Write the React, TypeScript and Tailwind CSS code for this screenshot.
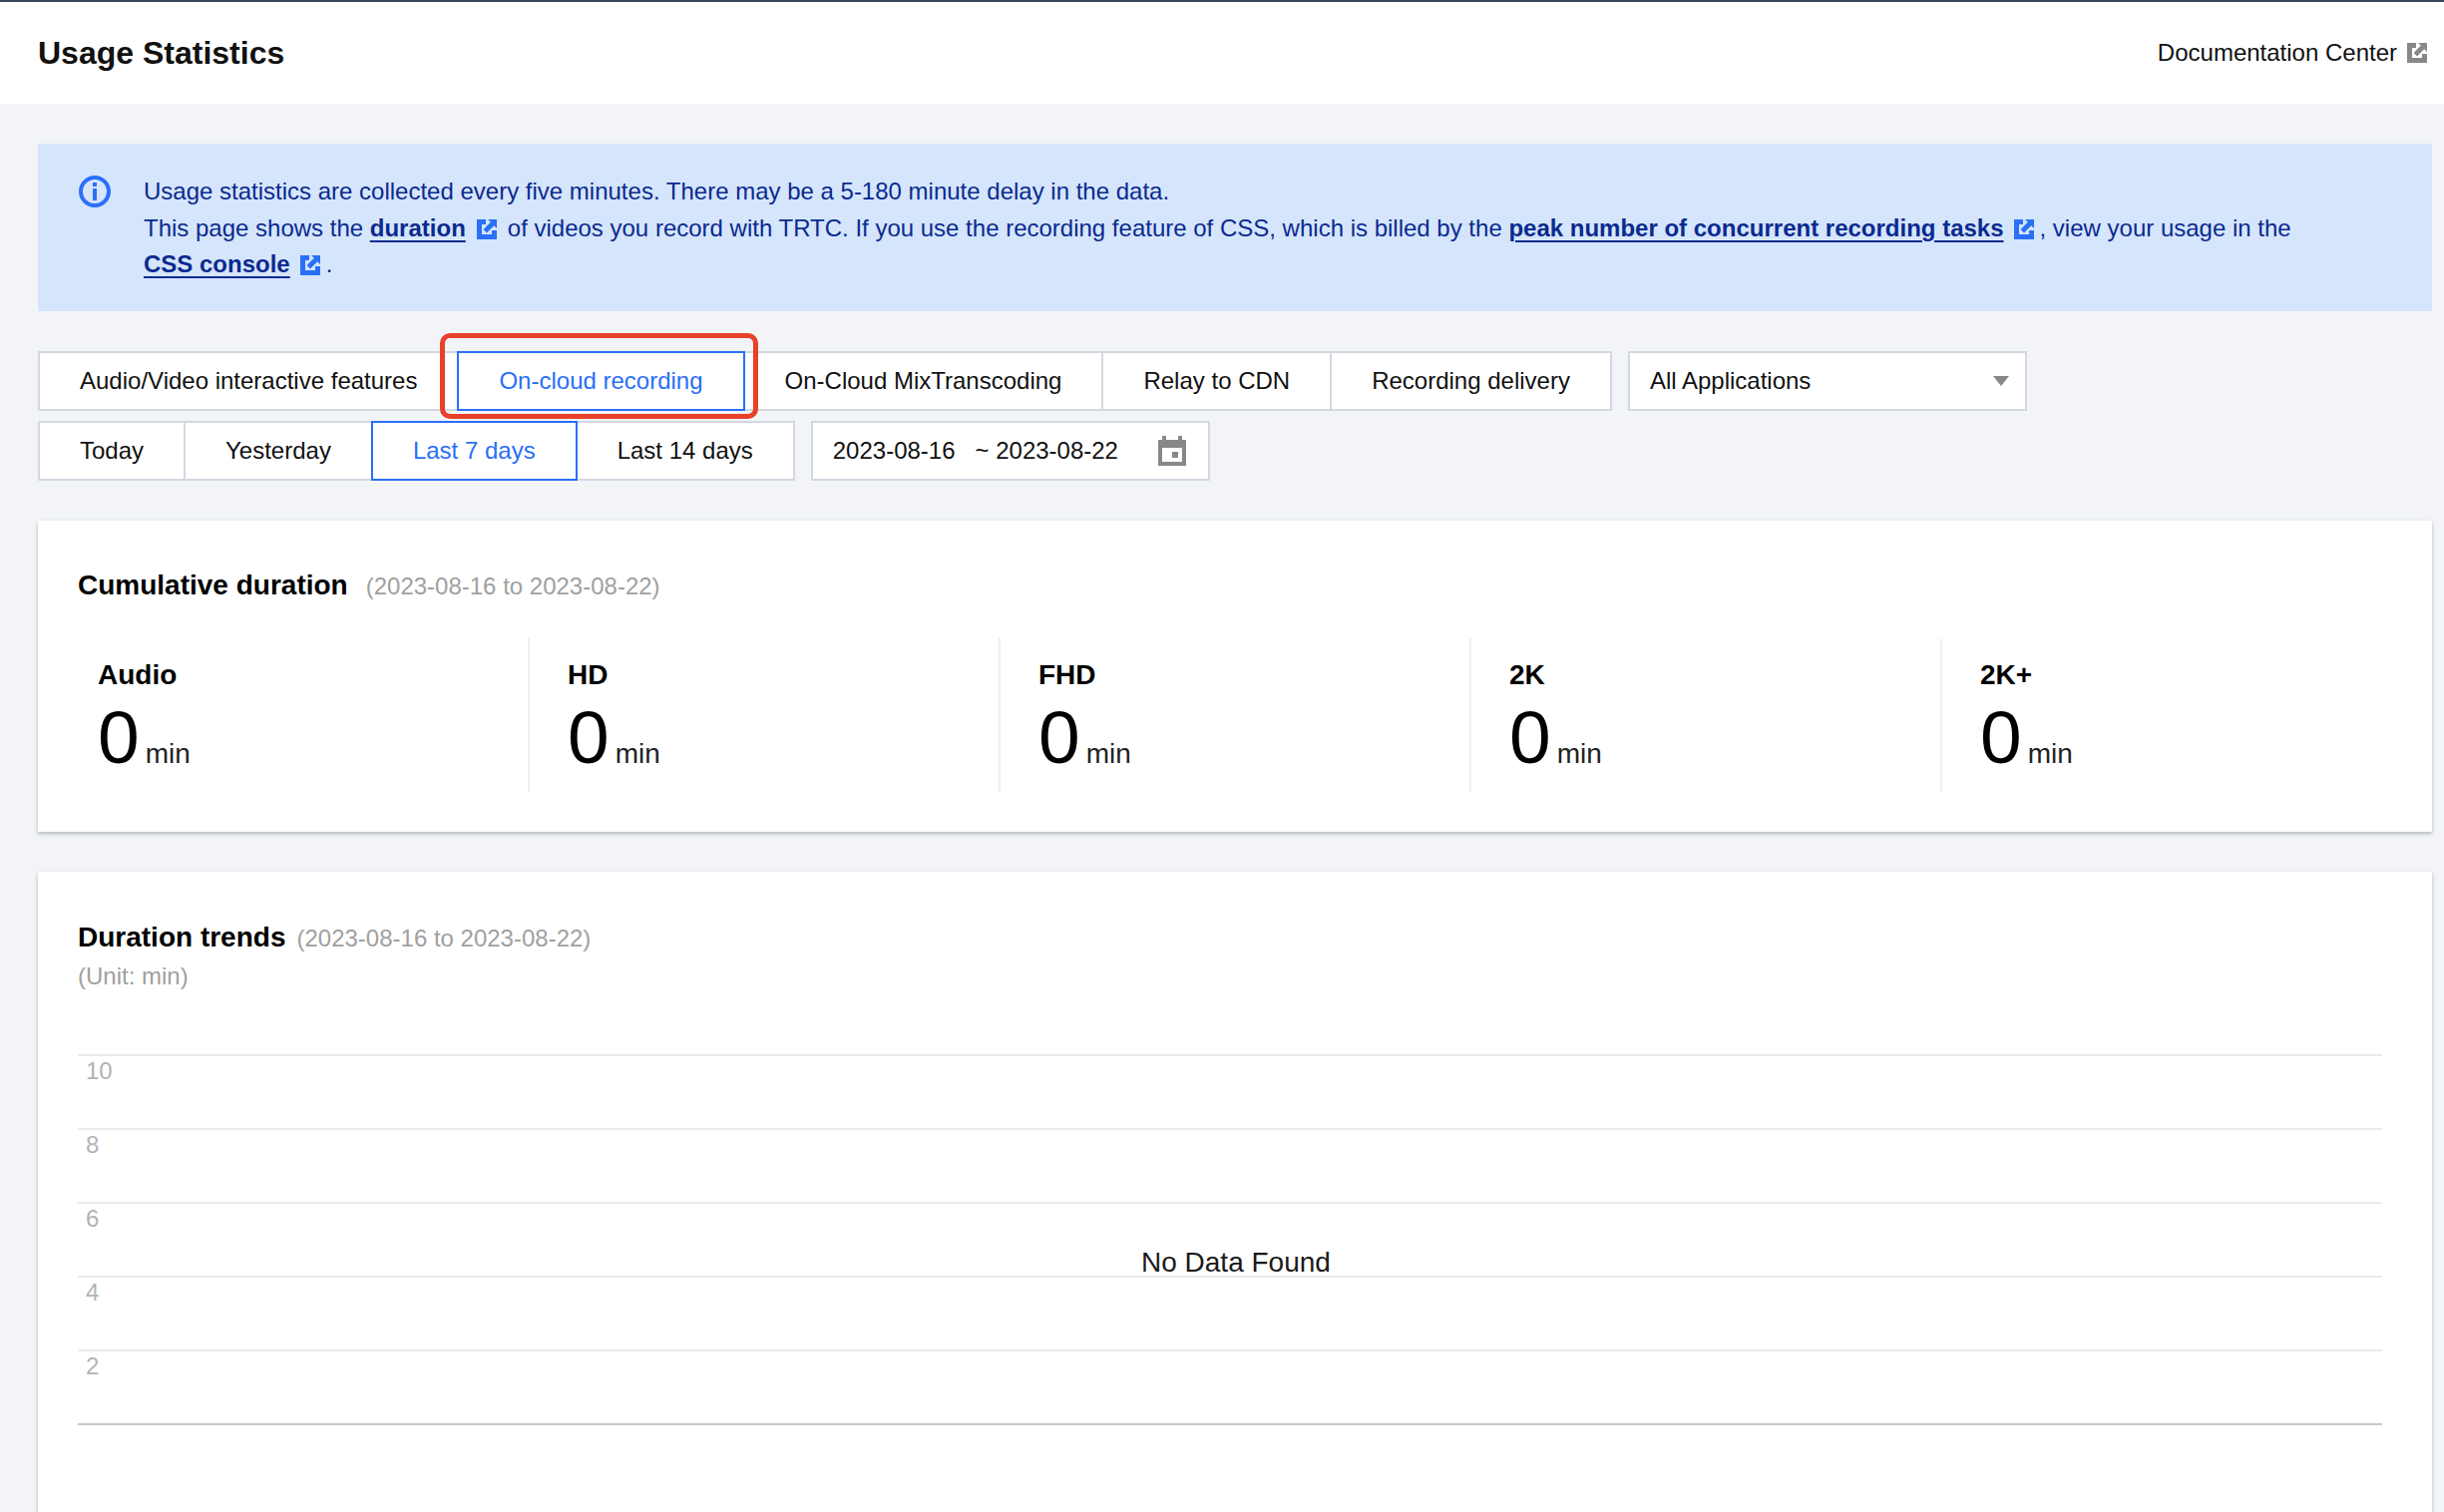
function ExternalIcon({ className }: { className: string }) {
  return (
    <svg viewBox="0 0 20 20" className={`inline-block w-[20px] h-[20px] align-[-3px] ${className}`} fill="currentColor">
      <path d="M0 0H9V5H5V15H15V11H20V20H0Z" />
      <path d="M11 0H20V9L17.2 6.2L10 13.4L6.6 10L13.8 2.8Z" />
    </svg>
  );
}

function InfoIcon() {
  return (
    <svg viewBox="0 0 32 32" className="w-[32px] h-[32px] shrink-0 text-[#2a6ff7]">
      <circle cx="16" cy="16" r="14" fill="none" stroke="currentColor" strokeWidth="4" />
      <rect x="14" y="7" width="4" height="4" fill="currentColor" />
      <rect x="14" y="13" width="4" height="12" fill="currentColor" />
    </svg>
  );
}

function CalendarIcon() {
  return (
    <svg viewBox="0 0 28 30" className="w-[28px] h-[30px] text-[#888888]" fill="currentColor">
      <path fillRule="evenodd" d="M4 0H8V4H20V0H24V4H28V30H0V4H4ZM4 12V26H24V12Z" />
      <rect x="14" y="16" width="6" height="6" />
    </svg>
  );
}

function LineTab({ label, active, highlight }: { label: string; active?: boolean; highlight?: boolean }) {
  return (
    <div
      className={`relative -ml-[2px] first:ml-0 h-[60px] px-[40px] flex items-center border-2 bg-white whitespace-nowrap ${
        active ? "z-10 border-[#2a6ff7] text-[#2a6ff7]" : "border-[#d3d7e1] text-[#111111]"
      }`}
    >
      {label}
      {highlight && (
        <div className="absolute -left-[19px] -right-[15px] -top-[20px] -bottom-[10px] border-[5px] border-[#e8412a] rounded-[10px]" />
      )}
    </div>
  );
}

function Metric({ label, className }: { label: string; className: string }) {
  return (
    <div className={`h-[154px] pt-[20px] ${className}`}>
      <div className="text-[28px] leading-[34px] font-bold text-black">{label}</div>
      <div className="flex items-baseline mt-[14px] text-black">
        <span className="text-[75px] leading-[62px]">0</span>
        <span className="text-[28px] leading-none ml-[6px] text-[#222222]">min</span>
      </div>
    </div>
  );
}

function ChartRow({ label }: { label: string }) {
  return (
    <div className="h-[74px] border-t-2 border-[#ebebeb] pl-[8px] pt-[1px] text-[24px] leading-[28px] text-[#b3b3b3]">{label}</div>
  );
}

export default function App() {
  return (
    <div className="h-[1516px] overflow-hidden bg-[#f2f4f8] font-['Liberation_Sans',Arial,sans-serif] text-[24px] text-[#111111]">
      <header className="h-[104px] bg-white border-t-2 border-[#3b4559] flex items-center justify-between pl-[38px] pr-[17px]">
        <h1 className="text-[32px] font-bold text-[#111111]">Usage Statistics</h1>
        <div className="flex items-center">
          <span>Documentation Center</span>
          <ExternalIcon className="ml-[10px] text-[#888888]" />
        </div>
      </header>

      <main className="pl-[38px] pr-[12px] pt-[40px]">
        <div className="h-[168px] bg-[#d5e5fc] flex pl-[41px] pt-[32px] text-[#0a2a8f] leading-[36.5px]">
          <InfoIcon />
          <div className="ml-[33px] -mt-[2px] whitespace-nowrap text-[24px]">
            <div>Usage statistics are collected every five minutes. There may be a 5-180 minute delay in the data.</div>
            <div>
              This page shows the{" "}
              <a className="font-bold underline decoration-2 underline-offset-[4px]">duration</a>
              <ExternalIcon className="mx-[11px] text-[#2a6ff7]" />
              of videos you record with TRTC. If you use the recording feature of CSS, which is billed by the{" "}
              <a className="font-bold underline decoration-2 underline-offset-[4px]">peak number of concurrent recording tasks</a>
              <ExternalIcon className="ml-[10px] mr-[6px] text-[#2a6ff7]" />, view your usage in the
            </div>
            <div>
              <a className="font-bold underline decoration-2 underline-offset-[4px]">CSS console</a>
              <ExternalIcon className="ml-[10px] mr-[6px] text-[#2a6ff7]" />.
            </div>
          </div>
        </div>

        <div className="flex mt-[40px]">
          <LineTab label="Audio/Video interactive features" />
          <LineTab label="On-cloud recording" active highlight />
          <LineTab label="On-Cloud MixTranscoding" />
          <LineTab label="Relay to CDN" />
          <LineTab label="Recording delivery" />
          <div className="ml-[16px] w-[400px] h-[60px] border-2 border-[#d3d7e1] bg-white flex items-center justify-between pl-[20px] pr-[16px]">
            <span>All Applications</span>
            <div className="w-0 h-0 border-x-[8px] border-x-transparent border-t-[10px] border-t-[#888888]" />
          </div>
        </div>

        <div className="flex mt-[10px]">
          <LineTab label="Today" />
          <LineTab label="Yesterday" />
          <LineTab label="Last 7 days" active />
          <LineTab label="Last 14 days" />
          <div className="ml-[16px] w-[400px] h-[60px] border-2 border-[#d3d7e1] bg-white flex items-center justify-between pl-[20px] pr-[22px]">
            <span className="whitespace-pre">2023-08-16   ~ 2023-08-22</span>
            <CalendarIcon />
          </div>
        </div>

        <section className="mt-[40px] h-[312px] bg-white shadow-[0_2px_4px_rgba(54,58,80,0.32)] pl-[40px] pt-[44px]">
          <div className="flex items-baseline h-[34px]">
            <h2 className="text-[28px] font-bold text-black">Cumulative duration</h2>
            <span className="ml-[18px] text-[#a0a0a0]">(2023-08-16 to 2023-08-22)</span>
          </div>
          <div className="flex mt-[40px]">
            <Metric label="Audio" className="w-[453px] pl-[20px] border-r-2 border-[#f0f0f0]" />
            <Metric label="HD" className="w-[472px] pl-[38px] border-r-2 border-[#f0f0f0]" />
            <Metric label="FHD" className="w-[472px] pl-[38px] border-r-2 border-[#f0f0f0]" />
            <Metric label="2K" className="w-[472px] pl-[38px] border-r-2 border-[#f0f0f0]" />
            <Metric label="2K+" className="w-[451px] pl-[38px]" />
          </div>
        </section>

        <section className="mt-[40px] h-[700px] bg-white shadow-[0_2px_4px_rgba(54,58,80,0.32)] pl-[40px] pt-[45px]">
          <div className="flex items-baseline h-[34px]">
            <h2 className="text-[28px] font-bold text-black">Duration trends</h2>
            <span className="ml-[11px] text-[#a0a0a0]">(2023-08-16 to 2023-08-22)</span>
          </div>
          <div className="mt-[9px] leading-[34px] text-[#a0a0a0]">(Unit: min)</div>

          <div className="relative w-[2310px] mt-[61px]">
            <ChartRow label="10" />
            <ChartRow label="8" />
            <ChartRow label="6" />
            <ChartRow label="4" />
            <ChartRow label="2" />
            <div className="border-t-2 border-[#c8c8c8]" />
            <div className="absolute left-[1066px] top-[192px] text-[28px] leading-[34px] text-[#1a1a1a]">No Data Found</div>
          </div>
        </section>
      </main>
    </div>
  );
}
